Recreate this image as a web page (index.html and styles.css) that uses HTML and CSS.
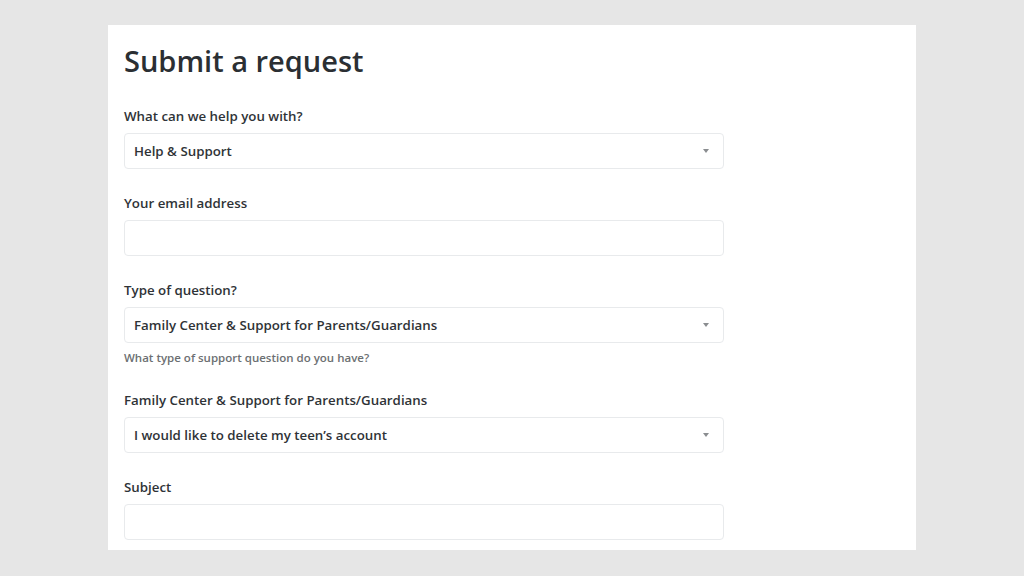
FILE: index.html
```html
<!DOCTYPE html>
<html lang="en">
<head>
<meta charset="utf-8">
<title>Submit a request</title>
<link rel="stylesheet" href="styles.css">
</head>
<body>
<main class="panel">
  <h1 class="title">Submit a request</h1>
  <form class="form">
    <div class="field">
      <label class="label">What can we help you with?</label>
      <div class="select"><span class="select-text">Help &amp; Support</span><span class="caret"></span></div>
    </div>
    <div class="field">
      <label class="label">Your email address</label>
      <div class="input"></div>
    </div>
    <div class="field">
      <label class="label">Type of question?</label>
      <div class="select"><span class="select-text">Family Center &amp; Support for Parents/Guardians</span><span class="caret"></span></div>
      <p class="hint">What type of support question do you have?</p>
    </div>
    <div class="field">
      <label class="label">Family Center &amp; Support for Parents/Guardians</label>
      <div class="select"><span class="select-text">I would like to delete my teen’s account</span><span class="caret"></span></div>
    </div>
    <div class="field">
      <label class="label">Subject</label>
      <div class="input"></div>
    </div>
  </form>
</main>
</body>
</html>
```

FILE: styles.css
```css
html, body {
  margin: 0;
  padding: 0;
  background: #e6e6e6;
  height: 576px;
  overflow: hidden;
}
body {
  font-family: "Open Sans", "Noto Sans", "Liberation Sans", sans-serif;
  color: #2e3236;
  padding: 25px 0 0 108px;
  box-sizing: border-box;
}
.panel {
  width: 808px;
  height: 525px;
  background: #ffffff;
  box-sizing: border-box;
  padding: 18px 16px 0 16px;
}
.title {
  margin: 0;
  font-size: 29px;
  line-height: 36px;
  font-weight: 600;
  color: #2b2f33;
}
.form {
  margin-top: 27px;
  width: 600px;
  display: flex;
  flex-direction: column;
  gap: 24px;
}
.field {
  display: flex;
  flex-direction: column;
}
.label {
  font-size: 13.3px;
  line-height: 20px;
  font-weight: 600;
  color: #2f3337;
  margin-bottom: 7px;
}
.select, .input {
  height: 36px;
  box-sizing: border-box;
  border: 1px solid #e8eaec;
  border-radius: 4px;
  background: #ffffff;
  display: flex;
  align-items: center;
  padding: 0 14px 0 9px;
}
.select-text {
  flex: 1;
  font-size: 13.3px;
  font-weight: 600;
  color: #2f3337;
}
.caret {
  width: 0;
  height: 0;
  border-left: 3px solid transparent;
  border-right: 3px solid transparent;
  border-top: 4px solid #8a8d90;
}
.hint {
  margin: 7px 0 0 0;
  font-size: 11.5px;
  line-height: 16px;
  font-weight: 600;
  color: #6c6f72;
}
```
